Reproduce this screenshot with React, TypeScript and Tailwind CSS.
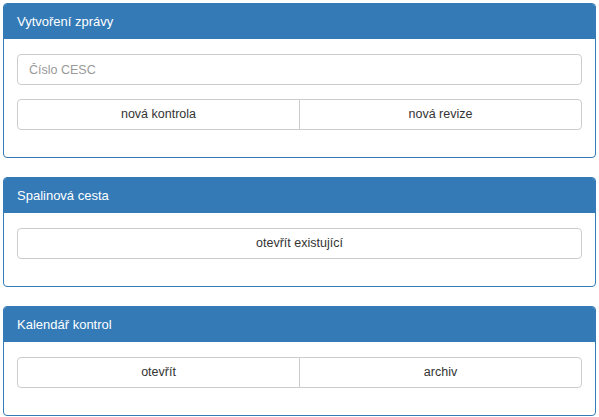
import React from "react";

const font = { fontFamily: '"Liberation Sans", Arial, sans-serif' };

function Panel({ title, children }: { title: string; children: React.ReactNode }) {
  return (
    <div className="border border-[#337ab7] rounded-[4px] bg-white mb-[19px] overflow-hidden">
      <div className="bg-[#337ab7] text-white h-[35px] flex items-center px-[13px] text-[13px]">
        {title}
      </div>
      <div className="px-[13px] pt-[15px] pb-[27px] flex flex-col gap-[14px]">{children}</div>
    </div>
  );
}

function Btn({ label, pos }: { label: string; pos: "l" | "r" | "s" }) {
  const r =
    pos === "l" ? "rounded-l-[4px]" : pos === "r" ? "rounded-r-[4px] -ml-px" : "rounded-[4px]";
  return (
    <button
      className={`flex-1 h-[31px] border border-[#ccc] bg-white text-[#333] text-[12.5px] ${r}`}
      style={font}
    >
      {label}
    </button>
  );
}

export default function App() {
  return (
    <div className="bg-white w-[599px] h-[417px] pt-[3px] pl-[3px] pr-[3px]" style={font}>
      <div className="w-[593px]">
        <Panel title="Vytvoření zprávy">
          <input
            placeholder="Číslo CESC"
            className="h-[31px] w-full border border-[#ccc] rounded-[4px] px-[11px] text-[12.5px] text-[#555] placeholder:text-[#999] outline-none"
            style={font}
          />
          <div className="flex">
            <Btn label="nová kontrola" pos="l" />
            <Btn label="nová revize" pos="r" />
          </div>
        </Panel>
        <Panel title="Spalinová cesta">
          <div className="flex">
            <Btn label="otevřít existující" pos="s" />
          </div>
        </Panel>
        <Panel title="Kalendář kontrol">
          <div className="flex">
            <Btn label="otevřít" pos="l" />
            <Btn label="archiv" pos="r" />
          </div>
        </Panel>
      </div>
    </div>
  );
}
